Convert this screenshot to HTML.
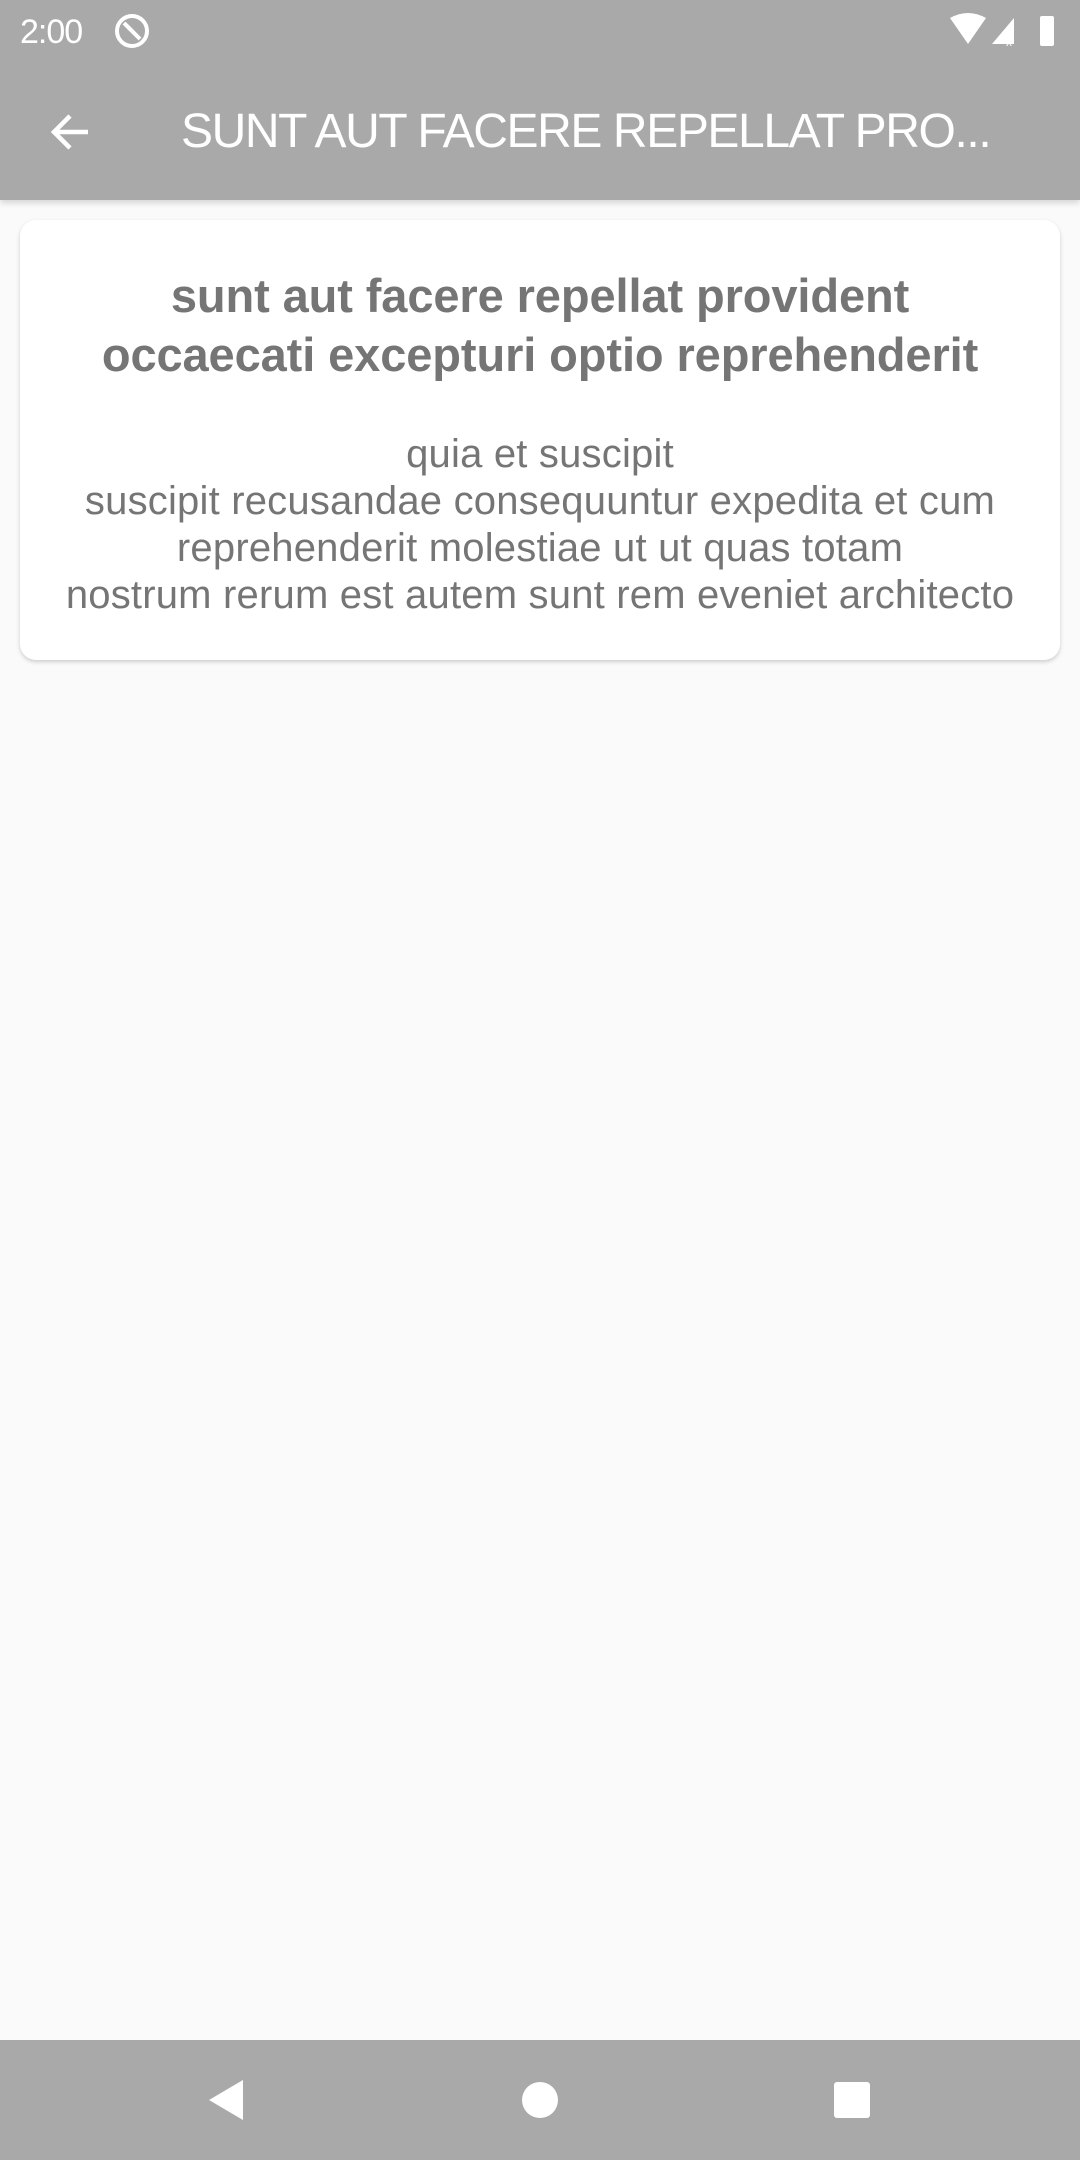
<!DOCTYPE html>
<html><head><meta charset="utf-8"><style>
*{margin:0;padding:0;box-sizing:border-box}
body{width:1080px;height:2160px;background:#fafafa;position:relative;overflow:hidden;font-family:"Liberation Sans",sans-serif}
.top{position:absolute;left:0;top:0;width:1080px;height:200px;background:#a9a9a9;box-shadow:0 3px 6px rgba(0,0,0,0.15)}
.time{position:absolute;left:20px;top:13px;font-size:34px;color:#fff;letter-spacing:-1px}
.ttl{position:absolute;left:181px;top:104px;font-size:48px;color:#fff;letter-spacing:-1.4px;white-space:nowrap}
.card{position:absolute;left:20px;top:220px;width:1040px;height:440px;background:#fff;border-radius:16px;box-shadow:0 2px 4px rgba(0,0,0,0.18);text-align:center;color:#757575}
.h{position:absolute;left:0;width:1040px;top:46px;font-size:47px;font-weight:bold;line-height:59px;letter-spacing:-0.1px;white-space:nowrap}
.b{position:absolute;left:0;width:1040px;top:211px;font-size:40px;line-height:47px;letter-spacing:0.2px;white-space:nowrap}
.nav{position:absolute;left:0;top:2040px;width:1080px;height:120px;background:#a9a9a9}
</style></head><body>
<div class="top">
<div class="time">2:00</div>
<svg style="position:absolute;left:113px;top:12px" width="38" height="38" viewBox="0 0 38 38"><circle cx="19" cy="19" r="15" fill="none" stroke="#fff" stroke-width="4"/><path d="M11 11 L27 27" stroke="#fff" stroke-width="4"/></svg>
<svg style="position:absolute;left:948px;top:12px" width="110" height="36" viewBox="0 0 110 36"><path d="M2 6 Q20 -4 38 6 L20 32 Z" fill="#fff"/><path d="M44 32 L66 6 L66 32 Z" fill="#fff"/><text x="58" y="34" font-size="12" fill="#fff" font-family="Liberation Sans">x</text><rect x="92" y="4" width="14" height="30" rx="2" fill="#fff"/></svg>
<svg style="position:absolute;left:48px;top:110px" width="44" height="44" viewBox="0 0 44 44"><path d="M40 22 H6 M22 6 L6 22 L22 38" fill="none" stroke="#fff" stroke-width="4.5"/></svg>
<div class="ttl">SUNT AUT FACERE REPELLAT PRO...</div>
</div>
<div class="card">
<div class="h">sunt aut facere repellat provident<br>occaecati excepturi optio reprehenderit</div>
<div class="b">quia et suscipit<br>suscipit recusandae consequuntur expedita et cum<br>reprehenderit molestiae ut ut quas totam<br>nostrum rerum est autem sunt rem eveniet architecto</div>
</div>
<div class="nav">
<svg style="position:absolute;left:205px;top:38px" width="42" height="44" viewBox="0 0 42 44"><path d="M38 2 L38 42 L4 22 Z" fill="#fff"/></svg>
<svg style="position:absolute;left:520px;top:40px" width="40" height="40"><circle cx="20" cy="20" r="18" fill="#fff"/></svg>
<svg style="position:absolute;left:832px;top:40px" width="40" height="40"><rect x="2" y="2" width="36" height="36" rx="3" fill="#fff"/></svg>
</div>
</body></html>
